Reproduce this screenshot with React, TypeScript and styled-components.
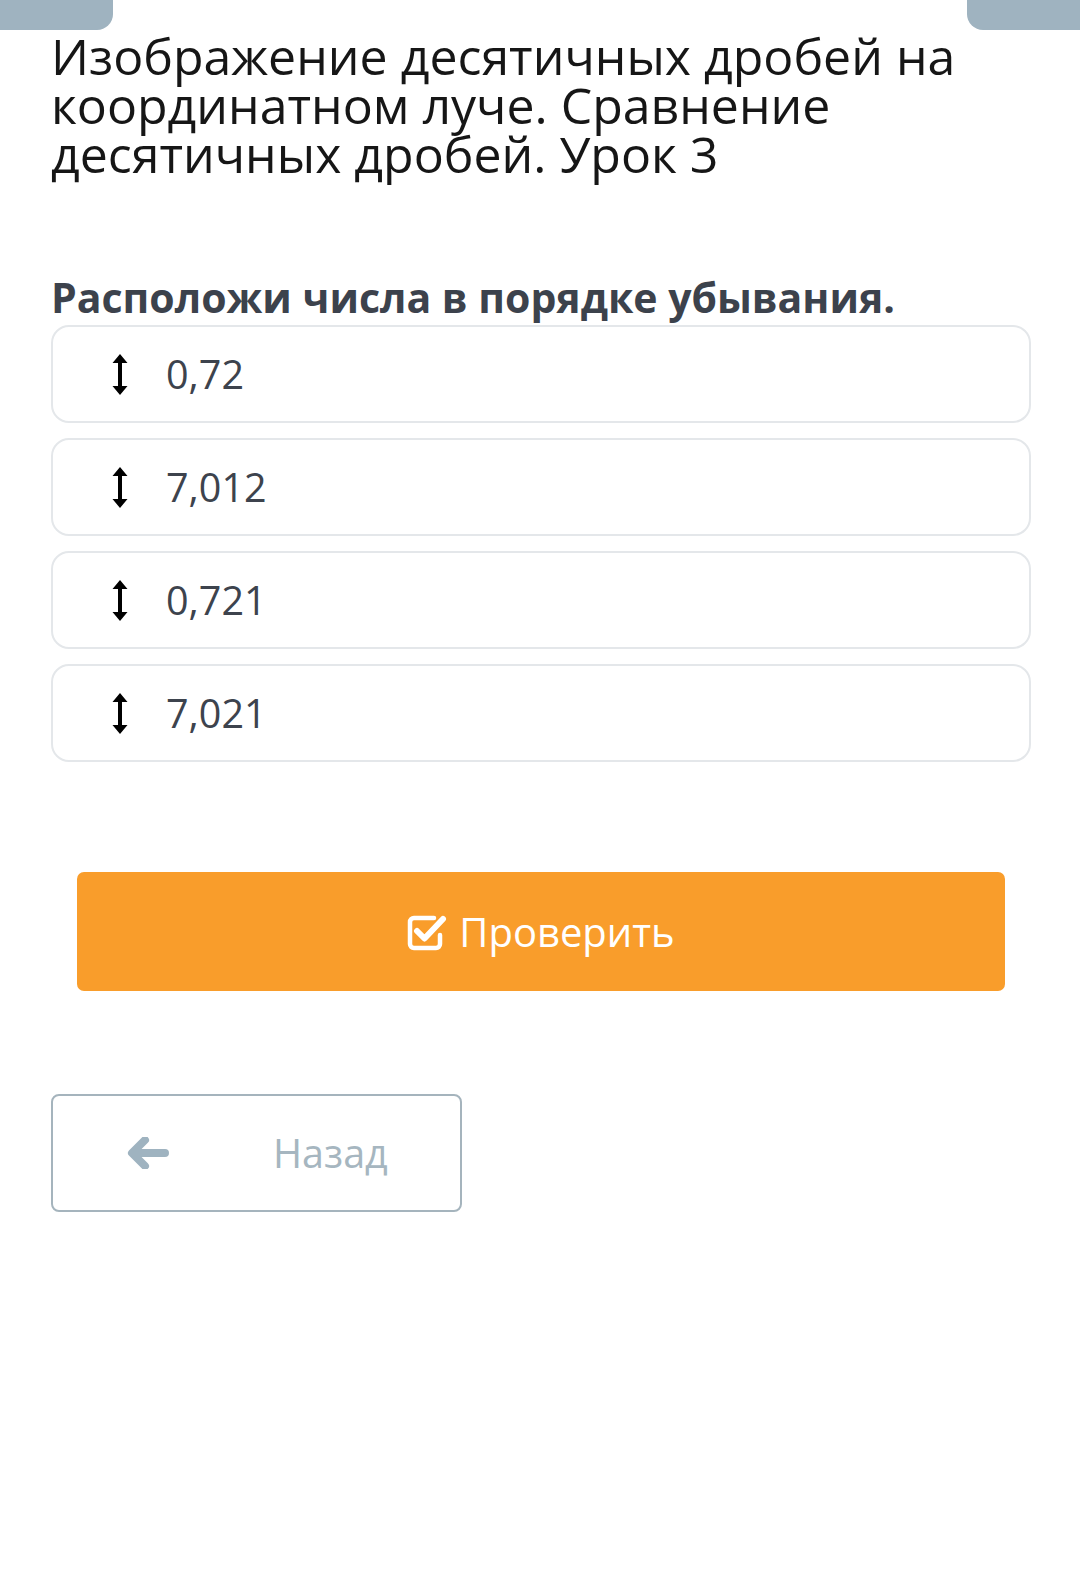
import React from "react";
import styled, { createGlobalStyle } from "styled-components";

const Global = createGlobalStyle`
  html, body { margin: 0; padding: 0; background: #ffffff; }
  body { font-family: "Open Sans", "Noto Sans", sans-serif; }
`;

const Page = styled.div`
  width: 1080px;
  min-height: 1584px;
  background: #fff;
`;

const TabBar = styled.div`
  display: flex;
  justify-content: space-between;
`;

const Tab = styled.div<{ side: "left" | "right" }>`
  width: 113px;
  height: 30px;
  background: #9fb3c0;
  border-radius: ${(p) => (p.side === "left" ? "0 0 16px 0" : "0 0 0 16px")};
`;

const Content = styled.div`
  padding: 2px 49px 0 51px;
  display: flex;
  flex-direction: column;
`;

const Title = styled.h1`
  margin: 0;
  font-size: 50px;
  line-height: 49px;
  font-weight: 400;
  color: #161616;
`;

const Question = styled.h2`
  margin: 96px 0 6px;
  font-size: 41px;
  line-height: 44px;
  font-weight: 700;
  color: #3c424c;
  white-space: nowrap;
`;

const List = styled.div`
  display: flex;
  flex-direction: column;
  gap: 15px;
`;

const Item = styled.div`
  height: 98px;
  box-sizing: border-box;
  border: 2px solid #e4e7ea;
  border-radius: 18px;
  display: flex;
  align-items: center;
  padding-left: 59px;
  gap: 38px;
  font-size: 39.5px;
  color: #3d434d;
`;

const Primary = styled.button`
  margin: 110px 26px 0 26px;
  height: 119px;
  border: none;
  border-radius: 7px;
  background: #f99d2b;
  color: #fff;
  font-family: inherit;
  font-size: 40px;
  display: flex;
  align-items: center;
  justify-content: center;
  gap: 12px;
`;

const Back = styled.button`
  margin-top: 103px;
  width: 411px;
  height: 118px;
  box-sizing: border-box;
  border: 2px solid #a5b4bd;
  border-radius: 8px;
  background: #fff;
  color: #a6b6c0;
  font-family: inherit;
  font-size: 39.5px;
  display: flex;
  align-items: center;
  padding: 0 0 0 74px;
  gap: 104px;
`;

const UpDown = () => (
  <svg width="16" height="41" viewBox="0 0 16 41">
    <path d="M8 0 L15.5 9 L10 9 L10 32 L15.5 32 L8 41 L0.5 32 L6 32 L6 9 L0.5 9 Z" fill="#000" />
  </svg>
);

const CheckBox = () => (
  <svg width="40" height="38" viewBox="0 0 40 38">
    <path
      d="M27 5 H7 A4 4 0 0 0 3 9 V31 A4 4 0 0 0 7 35 H29 A4 4 0 0 0 33 31 V22"
      fill="none"
      stroke="#fff"
      strokeWidth="4.5"
      strokeLinecap="round"
    />
    <path
      d="M10 18 L17.5 25.5 L36 6"
      fill="none"
      stroke="#fff"
      strokeWidth="6"
      strokeLinecap="round"
      strokeLinejoin="round"
    />
  </svg>
);

const LeftArrow = () => (
  <svg width="42" height="32" viewBox="0 0 42 32">
    <path
      d="M18 3 L5 16 L18 29 M6 16 H38"
      fill="none"
      stroke="#9fb3c0"
      strokeWidth="8"
      strokeLinecap="round"
      strokeLinejoin="round"
    />
  </svg>
);

const items = ["0,72", "7,012", "0,721", "7,021"];

export default function App() {
  return (
    <Page>
      <Global />
      <TabBar>
        <Tab side="left" />
        <Tab side="right" />
      </TabBar>
      <Content>
        <Title>
          Изображение десятичных дробей на координатном луче. Сравнение
          десятичных дробей. Урок 3
        </Title>
        <Question>Расположи числа в порядке убывания.</Question>
        <List>
          {items.map((v) => (
            <Item key={v}>
              <UpDown />
              <span>{v}</span>
            </Item>
          ))}
        </List>
        <Primary>
          <CheckBox />
          <span>Проверить</span>
        </Primary>
        <Back>
          <LeftArrow />
          <span>Назад</span>
        </Back>
      </Content>
    </Page>
  );
}
